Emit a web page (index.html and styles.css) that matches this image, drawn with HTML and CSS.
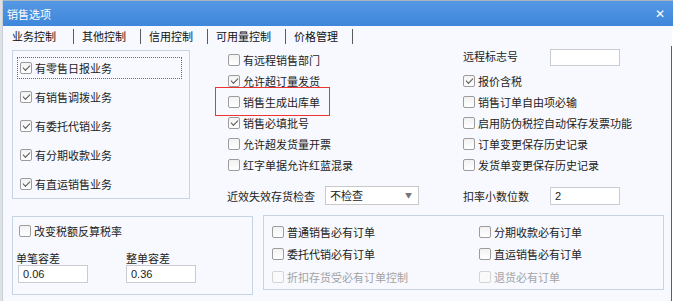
FILE: index.html
```html
<!doctype html>
<html lang="zh-CN">
<head>
	<meta charset="UTF-8">
	<title>销售选项</title>
	<link rel="stylesheet" href="styles.css">
</head>
<body>
	<div class="desk">
		<div class="strip"></div>
		<div class="window">
			<div class="titlebar">
				<span class="title">销售选项</span>
				<span class="close">✕</span>
			</div>

			<div class="tabs">
				<span class="tab first">业务控制</span>
				<span class="tab">其他控制</span>
				<span class="tab">信用控制</span>
				<span class="tab">可用量控制</span>
				<span class="tab">价格管理</span>
			</div>

			<div class="panel">
				<div class="top">
					<!-- left group -->
					<div class="group biz">
						<label class="brow focus"><span class="cb on"></span>有零售日报业务</label>
						<label class="brow"><span class="cb on"></span>有销售调拨业务</label>
						<label class="brow"><span class="cb on"></span>有委托代销业务</label>
						<label class="brow"><span class="cb on"></span>有分期收款业务</label>
						<label class="brow"><span class="cb on"></span>有直运销售业务</label>
					</div>

					<!-- middle column -->
					<div class="col mid">
						<label class="row"><span class="cb"></span>有远程销售部门</label>
						<label class="row"><span class="cb on"></span>允许超订量发货</label>
						<div class="mark">
							<label class="row"><span class="cb"></span>销售生成出库单</label>
						</div>
						<label class="row"><span class="cb on"></span>销售必填批号</label>
						<label class="row"><span class="cb"></span>允许超发货量开票</label>
						<label class="row"><span class="cb"></span>红字单据允许红蓝混录</label>
						<div class="row field">
							<span class="flabel">近效失效存货检查</span>
							<span class="select">不检查<span class="arrow">▼</span></span>
						</div>
					</div>

					<!-- right column -->
					<div class="col right">
						<div class="row first">
							<span class="flabel">远程标志号</span>
							<span class="input"></span>
						</div>
						<label class="row"><span class="cb on"></span>报价含税</label>
						<label class="row"><span class="cb"></span>销售订单自由项必输</label>
						<label class="row"><span class="cb"></span>启用防伪税控自动保存发票功能</label>
						<label class="row"><span class="cb"></span>订单变更保存历史记录</label>
						<label class="row"><span class="cb"></span>发货单变更保存历史记录</label>
						<div class="row field">
							<span class="flabel">扣率小数位数</span>
							<span class="input num">2</span>
						</div>
					</div>
				</div>

				<div class="bottom">
					<div class="group tax">
						<label class="row"><span class="cb"></span>改变税额反算税率</label>
						<div class="tols">
							<div class="tol">
								<span class="tlabel">单笔容差</span>
								<span class="input small">0.06</span>
							</div>
							<div class="tol">
								<span class="tlabel">整单容差</span>
								<span class="input small">0.36</span>
							</div>
						</div>
					</div>

					<div class="group orders">
						<label class="row"><span class="cb"></span>普通销售必有订单</label>
						<label class="row"><span class="cb"></span>分期收款必有订单</label>
						<label class="row"><span class="cb"></span>委托代销必有订单</label>
						<label class="row"><span class="cb"></span>直运销售必有订单</label>
						<label class="row off"><span class="cb"></span>折扣存货受必有订单控制</label>
						<label class="row off"><span class="cb"></span>退货必有订单</label>
					</div>
				</div>
			</div>
		</div>
	</div>
</body>
</html>
```

FILE: styles.css
```css
html, body {height: 100%; margin: 0;}
body {
	font-family: "Noto Sans CJK SC", "Microsoft YaHei", sans-serif;
	font-size: 11px;
	color: #1c1c1c;
	background: #fff;
}

.desk {
	display: flex;
	height: 301px;
	overflow: hidden;
}
.strip {
	width: 3px;
	background: #dfe1e4;
	border-right: 1px solid #c7cfd8;
	box-sizing: border-box;
}
.window {
	flex: 1;
	display: flex; flex-direction: column;
	background: #fff;
}

.titlebar {
	height: 26px;
	display: flex; align-items: center; justify-content: space-between;
	padding: 0 8px 0 4px;
	box-sizing: border-box;
	border-top: 1px solid #a9b4c0;
	background: linear-gradient(#5598e4, #3e86da);
	color: #fff;
}
.title {font-size: 11px;}
.close {font-size: 12px; font-weight: bold; font-family: "DejaVu Sans", sans-serif;}

.tabs {
	height: 20px;
	display: flex; align-items: center;
	background: #f7f9fe;
	width: 669px;
}
.tab {
	padding: 0 14px 0 8px;
	line-height: 15px;
	border-right: 1px solid #5b5b5b;
	color: #111;
}
.tab.first {padding-left: 9px; padding-right: 17px;}

.panel {
	width: 669px;
	height: 255px;
	box-sizing: border-box;
	padding: 4px 0 0 9px;
	background: #f7f9fe;
	border-right: 1px solid #5f5f5f;
}

.top {
	display: grid;
	grid-template-columns: 178px 273px 1fr;
	align-items: start;
}
.top > .mid {margin-left: 25px;}

.group {
	border: 1px solid #c6d4e4;
	box-sizing: border-box;
}

/* checkbox */
.cb {
	position: relative;
	width: 12px; height: 12px;
	box-sizing: border-box;
	border: 1px solid #9c9c9c;
	border-radius: 2px;
	background: linear-gradient(#f2f2f2, #fff);
	margin-right: 3px;
	flex: none;
}
.cb.on::after {
	content: "";
	position: absolute;
	left: 2px; top: 2px;
	width: 6px; height: 3px;
	border: solid #555;
	border-width: 0 0 1.5px 1.5px;
	transform: rotate(-45deg);
}

.row, .brow {
	display: flex; align-items: center;
	height: 21px;
	white-space: nowrap;
}

/* left group */
.biz {
	height: 149px;
	padding: 6px 0 0 4px;
	display: flex; flex-direction: column; gap: 7px;
}
.brow {
	height: 22px;
	width: 165px;
	box-sizing: border-box;
	padding-left: 2px;
	border: 1px dotted transparent;
}
.brow.focus {border-color: #6a6a6a;}

/* middle + right */
.mid {margin-top: -1px; padding-left: 13px;}
.right {margin-top: -1px;}

/* red annotation box around one option */
.mark {
	position: relative;
	width: 115px;
	margin-left: -13px;
	padding-left: 13px;
	box-sizing: border-box;
}
.mark::before {
	content: "";
	position: absolute;
	left: 0; right: 0;
	top: -4px; bottom: -4px;
	border: 1px solid #ee3333;
}

.row.field {margin-top: 11px; height: 19px;}
.mid .field {margin-left: -1px;}

.select {
	position: relative;
	margin-left: 10px;
	width: 94px; height: 19px;
	box-sizing: border-box;
	border: 1px solid #c9c9c9;
	background: #fff;
	padding-left: 4px;
	line-height: 17px;
}
.arrow {
	position: absolute;
	right: 6px; top: 0;
	font-size: 7px;
	color: #777;
}

.input {
	display: inline-block;
	width: 70px; height: 18px;
	box-sizing: border-box;
	border: 1px solid #c9cdd2;
	background: #fff;
	padding-left: 4px;
	line-height: 16px;
	font-family: "Liberation Sans", Arial, sans-serif;
	font-size: 11px;
}
.right .first {align-items: flex-start;}
.right .first .flabel {line-height: 15px; margin-right: 32px;}
.right .first .input {height: 17px;}
.right .field .flabel {margin-right: 21px;}

/* bottom */
.bottom {
	display: grid;
	grid-template-columns: 241px 401px;
	column-gap: 10px;
	align-items: start;
	margin-top: 10px;
}
.tax {
	margin-top: 1px;
	height: 79px;
	padding: 3px 0 0 6px;
}
.tols {
	display: flex;
	margin: 10px 0 0 -3px;
}
.tol {
	width: 110px;
	display: flex; flex-direction: column;
}
.tlabel {line-height: 14px; height: 14px;}
.tol:first-child .input {margin-left: 2px;}

.orders {
	height: 75px;
	padding: 5px 0 0 8px;
	display: grid;
	grid-template-columns: 207px 1fr;
}
.off {color: #a3a3a3;}
.off .cb {border-color: #d4d4d4; background: #fafafa;}
```
